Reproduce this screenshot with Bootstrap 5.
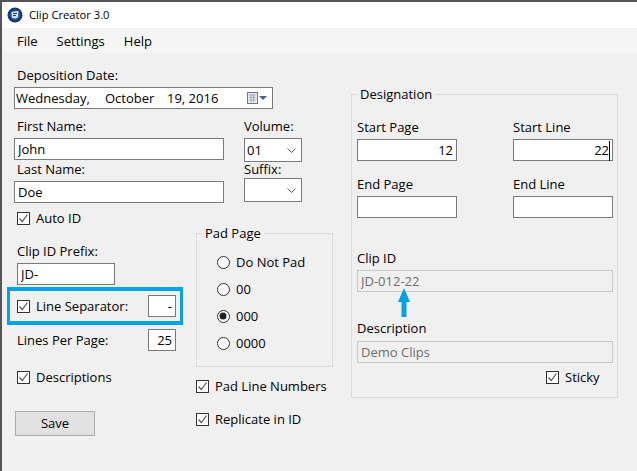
<!DOCTYPE html>
<html lang="en">
<head>
    <meta charset="UTF-8">
    <meta name="viewport" content="width=device-width, initial-scale=1.0">
    <title>Clip Creator 3.0</title>
    <link rel="stylesheet" href="https://cdn.jsdelivr.net/npm/bootstrap@5.3.0/dist/css/bootstrap.min.css">
    <style>
    html, body { height: 100%; }
    body {
        background-color: #f0f0f0;
        color: #000;
        font-family: "Open Sans", "Noto Sans", sans-serif;
        font-size: 13px;
        line-height: 16px;
        overflow: hidden;
    }
    .win-frame { height: 471px; border-top: 2px solid #555; border-left: 2px solid #555; }
    .title-strip { height: 26px; background: #fff; padding-left: 5px; gap: 6px; font-size: 11.2px; }
    .menu-strip { height: 25px; background: #f5f5f5; padding-left: 15px; gap: 19px; }

    .form-area { padding-left: 12px; }
    .left-area { width: 337px; flex: none; }
    .lbl { display: block; height: 16px; white-space: nowrap; margin-bottom: 0; }
    .lbl-in { margin-left: 3px; }

    /* spacing steps the bootstrap scale does not have */
    .mgt-1 { margin-top: 1px; }
    .mgt-5 { margin-top: 5px; }
    .mgt-7 { margin-top: 7px; }
    .mgt-9 { margin-top: 9px; }
    .mgt-11 { margin-top: 11px; }
    .mgt-14 { margin-top: 14px; }
    .mgt-15 { margin-top: 15px; }
    .mgt-17 { margin-top: 17px; }
    .mgt-18 { margin-top: 18px; }
    .mgt-28 { margin-top: 28px; }
    .mgt-32 { margin-top: 32px; }

    .win-input {
        display: block;
        height: 22px;
        border: 1px solid #7a7a7a;
        border-radius: 0;
        background: #fff;
        padding: 0 3px;
        font-size: 13px;
        line-height: 20px;
        color: #000;
        min-height: 0;
        box-shadow: none;
    }
    .win-input:disabled { background: #f0f0f0; border-color: #c8c8c8; color: #6d6d6d; opacity: 1; }
    .prefix-input { width: 98px; }

    .date-box { width: 259px; padding-left: 1px; margin-top: 4px; }
    .date-part-a { width: 89px; }
    .date-part-b { width: 62px; }
    .date-part-c { width: 80px; }

    .name-col { width: 210px; }
    .vol-col { width: 58px; margin-left: 20px; }
    .suffix-lbl { margin-top: -1px; }
    .win-select.form-select {
        width: 58px;
        height: 24px;
        padding: 0 0 0 2px;
        border: 1px solid #7a7a7a;
        border-radius: 0;
        font-size: 13px;
        line-height: 20px;
        color: #000;
        background-color: #fff;
        background-size: 9px 5px;
        background-position: right 5px center;
        background-image: url("data:image/svg+xml,%3csvg xmlns='http://www.w3.org/2000/svg' viewBox='0 0 9 5'%3e%3cpath fill='none' stroke='%23555' d='M.5.5l4 4 4-4'/%3e%3c/svg%3e");
    }

    .win-check.form-check-input {
        width: 13px;
        height: 13px;
        margin: 0 6px 0 0;
        flex: none;
        border: 1px solid #333;
        border-radius: 0;
        background-color: #fff;
        background-size: 11px 11px;
        box-shadow: none;
    }
    .win-check.form-check-input:checked {
        background-color: #fff;
        border-color: #333;
        background-image: url("data:image/svg+xml,%3csvg xmlns='http://www.w3.org/2000/svg' viewBox='0 0 11 11'%3e%3cpath fill='none' stroke='%23555' stroke-width='1.2' d='M1.5 5.5l2.8 3 5.2-7'/%3e%3c/svg%3e");
    }
    .win-radio.form-check-input {
        width: 13px;
        height: 13px;
        margin: 0 6px 0 0;
        flex: none;
        border: 1px solid #333;
        background-color: #fff;
        box-shadow: none;
    }
    .win-radio.form-check-input:checked {
        background-color: #fff;
        border-color: #333;
        background-image: url("data:image/svg+xml,%3csvg xmlns='http://www.w3.org/2000/svg' viewBox='0 0 13 13'%3e%3ccircle cx='6' cy='6' r='3.5' fill='%23222'/%3e%3c/svg%3e");
        background-size: 13px 13px;
    }
    .check-line { height: 16px; white-space: nowrap; margin-bottom: 0; }

    .lower-left { width: 182px; flex: none; }
    .highlight-box {
        width: 176px;
        height: 38px;
        margin: 2px 0 0 -7px;
        padding-left: 7px;
        border: 4px solid #00a2e8;
        border-left-width: 3px;
        border-right-width: 3px;
    }
    .highlight-box .check-line { width: 131px; }
    .small-input { width: 28px; }
    .lines-row { width: 162px; margin-top: 4px; }
    .save-btn {
        display: block;
        width: 80px;
        height: 25px;
        margin: 26px 0 0 1px;
        padding: 0;
        background: #e1e1e1;
        border: 1px solid #adadad;
        border-radius: 0;
        color: #000;
        font-size: 13px;
        line-height: 23px;
    }

    .win-group {
        margin: 0;
        padding: 0;
        border: 1px solid #dcdcdc;
        min-width: 0;
    }
    .win-group legend {
        float: none;
        width: auto;
        margin: 0 0 0 5px;
        padding: 0 3px;
        font-size: 13px;
        line-height: 16px;
    }
    .pad-group { width: 137px; height: 142px; margin-top: 22px; }
    .pad-list { padding: 13px 0 0 20px; gap: 11px; }
    .design-group { width: 267px; height: 312px; margin: 33px 0 0 0; padding: 0 4px 0 5px; position: relative; }
    .design-group legend { margin-left: 0; }
    .design-col { width: 100px; }
    .design-gap { gap: 56px; }
    .caret-mark { position: absolute; left: 257px; top: 39px; width: 1px; height: 20px; background: #000; }
    .up-arrow { position: absolute; left: 46px; top: 186px; }
    .sticky-line { margin: 6px 0 0 189px; }
    </style>
</head>
<body>
    <div class="win-frame">
        <div class="title-strip d-flex align-items-center">
            <svg width="16" height="16" viewBox="0 0 16 16">
                <circle cx="8" cy="8" r="7.5" fill="#123a78"/>
                <circle cx="8" cy="8" r="5" fill="#2f5c9c"/>
                <path d="M4.5 5l7-1-.5 6-2 1.5-4-.5z" fill="#d8e2f0"/>
                <path d="M6 6.5h4M6 8.5h3" stroke="#123a78"/>
            </svg>
            <span>Clip Creator 3.0</span>
        </div>
        <div class="menu-strip d-flex align-items-center">
            <span>File</span>
            <span>Settings</span>
            <span>Help</span>
        </div>

        <div class="form-area d-flex">
            <div class="left-area">
                <label class="lbl lbl-in mgt-14">Deposition Date:</label>
                <div class="win-input date-box d-flex align-items-center">
                    <span class="date-part-a">Wednesday,</span>
                    <span class="date-part-b">October</span>
                    <span class="date-part-c">19, 2016</span>
                    <svg width="21" height="12" viewBox="0 0 21 12">
                        <rect x=".5" y=".5" width="10" height="11" fill="#e4e8ee" stroke="#777"/>
                        <path d="M2.5 3h6M2.5 5.5h6M2.5 8h6M4 2v8M6.5 2v8" stroke="#a3adbc"/>
                        <path d="M12 4h8l-4 4z" fill="#4b6082"/>
                    </svg>
                </div>

                <div class="d-flex mgt-9">
                    <div class="name-col">
                        <label class="lbl lbl-in">First Name:</label>
                        <input class="win-input form-control w-100 mt-1" value="John">
                        <label class="lbl lbl-in mgt-1">Last Name:</label>
                        <input class="win-input form-control w-100 mt-1" value="Doe">
                    </div>
                    <div class="vol-col">
                        <label class="lbl">Volume:</label>
                        <select class="form-select win-select mt-1"><option>01</option></select>
                        <label class="lbl suffix-lbl">Suffix:</label>
                        <select class="form-select win-select mgt-1"><option></option></select>
                    </div>
                </div>

                <div class="d-flex">
                    <div class="lower-left">
                        <label class="check-line d-flex align-items-center lbl-in mgt-7">
                            <input type="checkbox" class="form-check-input win-check" checked>Auto ID
                        </label>
                        <label class="lbl lbl-in mgt-17">Clip ID Prefix:</label>
                        <input class="win-input form-control prefix-input lbl-in mt-1" value="JD-">
                        <div class="highlight-box d-flex align-items-center">
                            <label class="check-line d-flex align-items-center">
                                <input type="checkbox" class="form-check-input win-check" checked>Line Separator:
                            </label>
                            <input class="win-input form-control small-input text-end" value="-">
                        </div>
                        <div class="lines-row d-flex align-items-center justify-content-between">
                            <span class="lbl lbl-in">Lines Per Page:</span>
                            <input class="win-input form-control small-input text-end" value="25">
                        </div>
                        <label class="check-line d-flex align-items-center lbl-in mgt-18">
                            <input type="checkbox" class="form-check-input win-check" checked>Descriptions
                        </label>
                        <button type="button" class="btn save-btn">Save</button>
                    </div>
                    <div>
                        <fieldset class="win-group pad-group">
                            <legend>Pad Page</legend>
                            <div class="pad-list d-flex flex-column">
                                <label class="check-line d-flex align-items-center"><input type="radio" name="pad" class="form-check-input win-radio">Do Not Pad</label>
                                <label class="check-line d-flex align-items-center"><input type="radio" name="pad" class="form-check-input win-radio">00</label>
                                <label class="check-line d-flex align-items-center"><input type="radio" name="pad" class="form-check-input win-radio" checked>000</label>
                                <label class="check-line d-flex align-items-center"><input type="radio" name="pad" class="form-check-input win-radio">0000</label>
                            </div>
                        </fieldset>
                        <label class="check-line d-flex align-items-center mgt-11">
                            <input type="checkbox" class="form-check-input win-check" checked>Pad Line Numbers
                        </label>
                        <label class="check-line d-flex align-items-center mgt-17">
                            <input type="checkbox" class="form-check-input win-check" checked>Replicate in ID
                        </label>
                    </div>
                </div>
            </div>

            <fieldset class="win-group design-group">
                <legend>Designation</legend>
                <div class="d-flex design-gap mgt-17">
                    <div class="design-col">
                        <label class="lbl">Start Page</label>
                        <input class="win-input form-control w-100 mt-1 text-end" value="12">
                    </div>
                    <div class="design-col">
                        <label class="lbl">Start Line</label>
                        <input class="win-input form-control w-100 mt-1 text-end" value="22">
                    </div>
                </div>
                <div class="d-flex design-gap mgt-15">
                    <div class="design-col">
                        <label class="lbl">End Page</label>
                        <input class="win-input form-control w-100 mt-1">
                    </div>
                    <div class="design-col">
                        <label class="lbl">End Line</label>
                        <input class="win-input form-control w-100 mt-1">
                    </div>
                </div>
                <label class="lbl mgt-32">Clip ID</label>
                <input class="win-input form-control w-100 mt-1" value="JD-012-22" disabled>
                <label class="lbl mgt-28">Description</label>
                <input class="win-input form-control w-100 mgt-5" value="Demo Clips" disabled>
                <label class="check-line d-flex align-items-center sticky-line">
                    <input type="checkbox" class="form-check-input win-check" checked>Sticky
                </label>
                <span class="caret-mark"></span>
                <svg class="up-arrow" width="12" height="29" viewBox="0 0 12 29">
                    <path d="M6 0l6 14H8.5v15h-5V14H0z" fill="#00a2e8"/>
                </svg>
            </fieldset>
        </div>
    </div>
    <script src="https://cdn.jsdelivr.net/npm/bootstrap@5.3.0/dist/js/bootstrap.bundle.min.js"></script>
</body>
</html>
